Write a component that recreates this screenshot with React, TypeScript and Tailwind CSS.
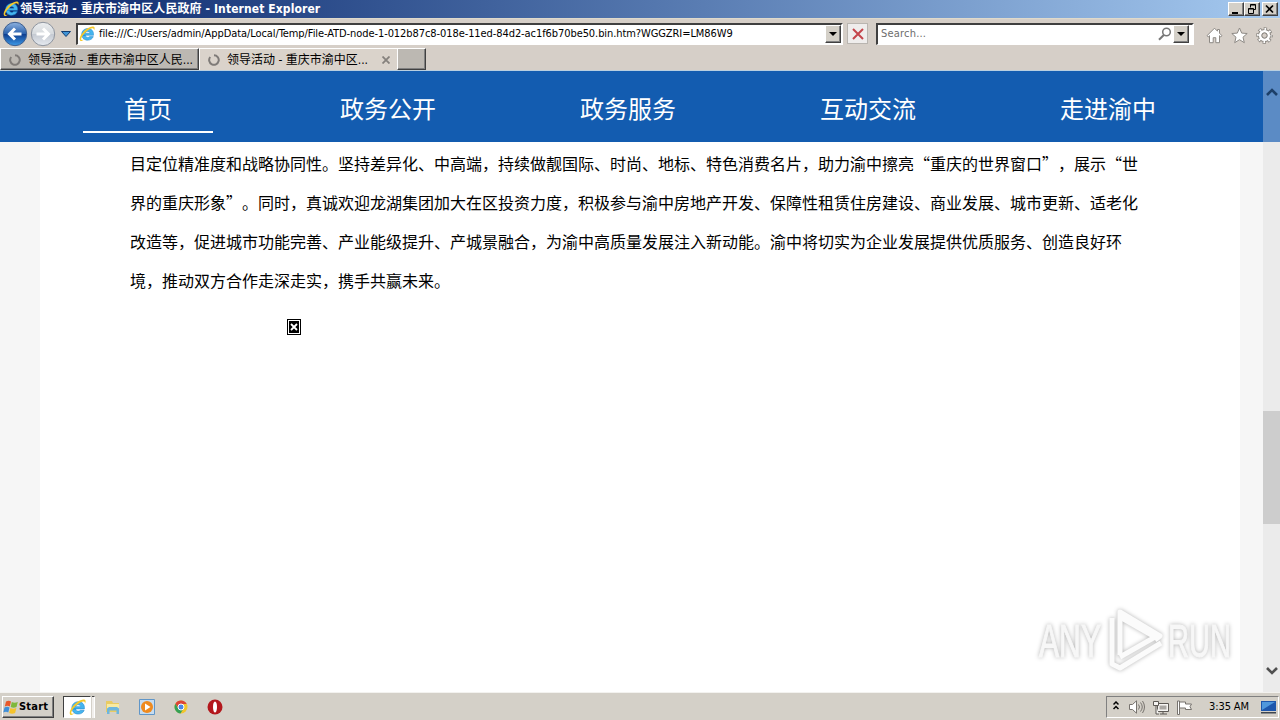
import type { ReactNode } from 'react';

const NAV = ['首页', '政务公开', '政务服务', '互动交流', '走进渝中'];

const LINES = [
  '目定位精准度和战略协同性。坚持差异化、中高端，持续做靓国际、时尚、地标、特色消费名片，助力渝中擦亮“重庆的世界窗口”，展示“世',
  '界的重庆形象”。同时，真诚欢迎龙湖集团加大在区投资力度，积极参与渝中房地产开发、保障性租赁住房建设、商业发展、城市更新、适老化',
  '改造等，促进城市功能完善、产业能级提升、产城景融合，为渝中高质量发展注入新动能。渝中将切实为企业发展提供优质服务、创造良好环',
  '境，推动双方合作走深走实，携手共赢未来。',
];

const RAISED =
  'border border-t-white border-l-white border-r-[#404040] border-b-[#404040] shadow-[inset_-1px_-1px_0_#808080]';

function IeLogo({ className }: { className: string }) {
  return (
    <svg viewBox="0 0 16 16" className={className}>
      <path d="M3.2 9.300h11.300c.4-4.300-2-6.700-5.800-6.700-3.500 0-6 2.400-6 5.800s2.500 5.800 6 5.800c2.700 0 4.700-1.300 5.600-3.600h-3.700c-.5.6-1.100.8-1.800.8-1.400 0-2.300-.8-2.400-2.100zm3.100-2.100c.2-1.100 1.100-1.800 2.400-1.800s2.200.7 2.300 1.800z" fill="#45b4ee" stroke="#1f86cc" strokeWidth=".5" />
      <path d="M1.300 14.800C-.9 12.700 3 6.500 7.500 3.100 11 .5 14.800-.4 15.500 1.500c.3.900 0 2-.6 3.100.2-1.200.1-2-.7-2.200C12.500 2 8.800 4 6 6.900c-3 3-4.500 6-3.600 6.800.6.500 1.700.2 3-.5-1.700 1.400-3.300 2.300-4.100 1.600z" fill="#f6c829" />
    </svg>
  );
}

function TitleBar() {
  return (
    <div className="flex h-[18px] shrink-0 items-center bg-linear-to-r from-[#0a246a] to-[#a6caf0] pl-[3px] pr-[2px]">
      <IeLogo className="h-4 w-4 shrink-0" />
      <span className="ml-px whitespace-nowrap text-[12px] font-bold tracking-[0.1px] text-white">
        领导活动 - 重庆市渝中区人民政府 - Internet Explorer
      </span>
      <div className="ml-auto flex">
        <CaptionButton>
          <path d="M3 10h6" strokeWidth="2" />
        </CaptionButton>
        <CaptionButton>
          <path d="M5.500 4.500v-3h5v5h-2M5.500 2h5M3.500 5.500h5v5h-5zM3.500 6h5" />
        </CaptionButton>
        <div className="w-[2px]" />
        <CaptionButton>
          <path d="M3 2.500l7 7M10 2.500l-7 7" strokeWidth="1.700" />
        </CaptionButton>
      </div>
    </div>
  );
}

function CaptionButton({ children }: { children: ReactNode }) {
  return (
    <button className={`h-[14px] w-4 bg-[#d4d0c8] ${RAISED}`}>
      <svg viewBox="0 0 14 12" className="h-3 w-[14px]" fill="none" stroke="#000">
        {children}
      </svg>
    </button>
  );
}

function RoundArrow({ back }: { back?: boolean }) {
  return (
    <svg viewBox="0 0 26 26" className="h-[26px] w-[26px]">
      <defs>
        <linearGradient id={back ? 'ball-on' : 'ball-off'} x1="0" y1="0" x2="0" y2="1">
          <stop offset="0" stopColor={back ? '#8fb3e0' : '#eceef0'} />
          <stop offset=".48" stopColor={back ? '#2d63ae' : '#d6dade'} />
          <stop offset=".52" stopColor={back ? '#0f3f91' : '#c5cad2'} />
          <stop offset="1" stopColor={back ? '#3f9be8' : '#e6eaf0'} />
        </linearGradient>
      </defs>
      <circle cx="13" cy="13" r="11.700" fill={back ? 'url(#ball-on)' : 'url(#ball-off)'} stroke={back ? '#3f5f8f' : '#8e949e'} />
      <path
        d={back ? 'M19.500 13H8M13 7.500L7.500 13l5.500 5.500' : 'M6.500 13H18M13 7.500l5.500 5.500-5.500 5.500'}
        fill="none"
        stroke="#fff"
        strokeWidth="3"
      />
    </svg>
  );
}

function DropButton() {
  return (
    <button className={`flex h-[18px] w-4 items-center justify-center bg-[#d4d0c8] ${RAISED}`}>
      <svg viewBox="0 0 8 4" className="h-1 w-2">
        <path d="M0 0h8L4 4z" />
      </svg>
    </button>
  );
}

function AddressBar() {
  return (
    <div className="flex h-[30px] shrink-0 items-center border-t border-[#dfdacb]">
      <div className="flex items-center pl-[2px]">
        <RoundArrow back />
        <div className="ml-[2px]">
          <RoundArrow />
        </div>
      </div>
      <svg viewBox="0 0 10 6" className="ml-[5px] h-[6px] w-[10px]">
        <path d="M.5.5h9L5 5.500z" fill="#3f94d6" stroke="#123e72" />
      </svg>
      <div className="ml-[5px] flex h-[22px] w-[767px] items-center border-2 border-b border-[#404040] border-r-white border-b-white bg-white pl-px">
        <IeLogo className="h-4 w-4 shrink-0" />
        <span className="ml-[4px] whitespace-nowrap text-[11px] tracking-[-0.08px] text-black">
          file:///C:/Users/admin/AppData/Local/Temp/File-ATD-node-1-012b87c8-018e-11ed-84d2-ac1f6b70be50.bin.htm?WGGZRI=LM86W9
        </span>
        <div className="ml-auto">
          <DropButton />
        </div>
      </div>
      <button className="ml-1 flex h-[21px] w-[21px] items-center justify-center border border-[#b9b5b0] bg-[#efedec]">
        <svg viewBox="0 0 12 12" className="h-3 w-3" stroke="#c4454b" strokeWidth="2">
          <path d="M1 1l10 10M11 1L1 11" />
        </svg>
      </button>
      <div className="ml-[8px] flex h-[22px] w-[318px] items-center border-2 border-b border-[#404040] border-r-white border-b-white bg-white px-[3px]">
        <span className="text-[11px] tracking-[0.2px] text-[#6d6d6d]">Search...</span>
        <svg viewBox="0 0 14 14" className="ml-auto mr-px h-[14px] w-[14px]" fill="none" stroke="#777" strokeWidth="1.500">
          <circle cx="8.500" cy="5" r="3.800" />
          <path d="M5.800 8L1 12.800" strokeWidth="2" />
        </svg>
        <DropButton />
      </div>
      <div className="ml-auto flex items-center gap-2 pr-[7px] pt-[3px]">
        <svg viewBox="0 0 17 17" className="h-[17px] w-[17px]" fill="#fff" stroke="#8d8984">
          <path d="M8.500 1.200L1 8.700l1.300 1.100 1.200-1.100v7h3.700v-5h2.600v5h3.700v-7l1.200 1.100L16 8.700l-2.500-2.500V2.500h-2v1.700z" />
        </svg>
        <svg viewBox="0 0 17 17" className="h-[17px] w-[17px]" fill="#fff" stroke="#8d8984">
          <path d="M8.500 1l2.200 5.100 5.500.4-4.200 3.700 1.300 5.500-4.800-3-4.800 3L5 10.200.8 6.500l5.500-.4z" />
        </svg>
        <svg viewBox="0 0 17 17" className="h-[17px] w-[17px]" fill="none" stroke="#8d8984">
          <circle cx="8.500" cy="8.500" r="6.300" strokeWidth="4" strokeDasharray="3 1.948" strokeDashoffset="1.500" />
          <circle cx="8.500" cy="8.500" r="4.600" strokeWidth="4" />
          <circle cx="8.500" cy="8.500" r="6.300" stroke="#fff" strokeWidth="2.600" strokeDasharray="1.600 3.348" strokeDashoffset=".8" />
          <circle cx="8.500" cy="8.500" r="4.300" stroke="#fff" strokeWidth="2.600" />
          <circle cx="8.500" cy="8.500" r="2.600" />
        </svg>
      </div>
    </div>
  );
}

function Spinner() {
  return (
    <svg viewBox="0 0 12 12" className="h-3 w-3 shrink-0" fill="none" stroke="#7f7b78" strokeWidth="2">
      <path d="M2.200 3A4.800 4.800 0 1 0 6 1.200" />
    </svg>
  );
}

function Tabs() {
  return (
    <div className="flex h-[22px] shrink-0 text-[12px] text-black">
      <div className={`flex w-[199px] items-center bg-[#bcb8b2] pl-2 pt-px ${RAISED}`}>
        <Spinner />
        <span className="ml-[7px] whitespace-nowrap">领导活动 - 重庆市渝中区人民...</span>
      </div>
      <div className="flex w-[198px] items-center border-l border-t border-white bg-[#dad3cb] pl-2">
        <Spinner />
        <span className="ml-[7px] whitespace-nowrap">领导活动 - 重庆市渝中区...</span>
        <svg viewBox="0 0 8 8" className="ml-auto mr-[7px] h-2 w-2" stroke="#85817d" strokeWidth="1.800">
          <path d="M.5.5l7 7M7.500.5l-7 7" />
        </svg>
      </div>
      <div className={`w-[29px] bg-[#bcb8b2] ${RAISED}`} />
    </div>
  );
}

function ScrollBar() {
  return (
    <div className="flex w-[17px] shrink-0 flex-col bg-[#ebebeb]">
      <div className="flex h-[71px] justify-center bg-[#5b8bc5] pt-[17px]">
        <svg viewBox="0 0 12 8" className="h-2 w-3" fill="none" stroke="#1d3f68" strokeWidth="2.600">
          <path d="M1 7l5-5 5 5" />
        </svg>
      </div>
      <div className="mt-[269px] h-[113px] bg-[#cdcdcd]" />
      <svg viewBox="0 0 12 8" className="mx-auto mb-[17px] mt-auto h-2 w-3" fill="none" stroke="#505050" strokeWidth="2.600">
        <path d="M1 1l5 5 5-5" />
      </svg>
    </div>
  );
}

function Watermark() {
  return (
    <svg viewBox="0 0 208 64" className="absolute right-[18px] bottom-[20px] h-16 w-[208px] drop-shadow-[0_0_2px_rgba(0,0,0,0.3)]">
      <g fill="#f7f7f7" stroke="#f7f7f7" fontFamily="'Liberation Sans', sans-serif" fontSize="47">
        <text transform="translate(2 48.500) scale(.642 1)">ANY</text>
        <text transform="translate(131 48.500) scale(.62 1)">RUN</text>
      </g>
      <g fill="none" stroke="#fbfbfb" strokeWidth="5" strokeLinejoin="round">
        <path d="M83 47V4l40 24-5 4" />
        <path d="M83 49l35-20-35-20M75 10v46l8 4 41-25" />
      </g>
    </svg>
  );
}

function Page() {
  return (
    <div className="flex min-h-0 flex-1 border-t border-[#b9cfe0]">
      <div className="relative flex flex-1 flex-col bg-[#f6f6f6]">
        <nav className="flex h-[71px] shrink-0 bg-[#135cb0] pl-7">
          {NAV.map((label, i) => (
            <div key={label} className="flex w-60 justify-center">
              <span
                className={`flex h-[62px] w-[130px] items-center justify-center whitespace-nowrap pt-[14px] text-[24px] text-white ${
                  i === 0 ? 'border-b-2 border-white' : 'border-b-2 border-transparent'
                }`}
              >
                {label}
              </span>
            </div>
          ))}
        </nav>
        <article className="ml-10 flex-1 w-[1200px] bg-white pl-[90px] pt-[2px] text-[16px] leading-[39px] text-black [text-spacing-trim:space-all]">
          {LINES.map((line) => (
            <p key={line} className="whitespace-nowrap">{line}</p>
          ))}
          <div className="ml-[157px] mt-[19px] flex h-4 w-[14px] items-center justify-center border border-black">
            <svg viewBox="0 0 10 12" className="h-3 w-[10px]" stroke="#fff" strokeWidth="1.800">
              <path d="M0 0h10v12H0z" fill="#000" stroke="none" />
              <path d="M2 3l6 6M8 3L2 9" />
            </svg>
          </div>
        </article>
        <Watermark />
      </div>
      <ScrollBar />
    </div>
  );
}

function WindowsFlag() {
  return (
    <svg viewBox="0 0 16 16" className="h-4 w-4 shrink-0">
      <path d="M3 2.500c2-1 3.500-1 5 0L6.800 7.500c-1.600-1-3.200-1-5 0z" fill="#e8582a" />
      <path d="M8.800 3c1.800 1 3.800 1 6 0l-1.300 5c-2 1-4 1-5.800 0z" fill="#7fb83a" />
      <path d="M1.500 8.500c1.800-1 3.400-1 5 0l-1.200 5c-1.500-1-3.200-1-5 0z" fill="#3f8fd8" />
      <path d="M7.400 9c1.800 1 3.800 1 6 0l-1.300 5c-2 1-4 1-6 0z" fill="#f5c32c" />
    </svg>
  );
}

function TaskBar() {
  return (
    <div className="flex h-[27px] shrink-0 items-center bg-[#d4d0c8] pt-px">
      <button className={`ml-[2px] flex h-[22px] w-[52px] items-center bg-[#d4d0c8] text-[11px] font-bold text-black ${RAISED}`}>
        <WindowsFlag />
        <span className="tracking-[0.2px]">Start</span>
      </button>
      <div className="ml-[9px] flex h-[22px] w-[28px] items-center justify-center border border-[#404040] border-r-white border-b-white bg-white">
        <IeLogo className="h-[17px] w-[17px]" />
      </div>
      <div className="ml-px h-[22px] w-[3px] border-t border-r border-[#404040] border-r-white bg-[#f1efec]" />
      <svg viewBox="0 0 16 16" className="ml-[10px] h-4 w-4">
        <path d="M1 2h6l1 2h6v9H1z" fill="#e9cb63" />
        <path d="M2 5h12v5H2z" fill="#f8eaa2" />
        <path d="M2 15V9.500l2-1.500h8l2 1.500V15h-2.500v-3.500h-7V15z" fill="#6db6de" />
      </svg>
      <svg viewBox="0 0 16 16" className="ml-[18px] h-4 w-4">
        <path d="M.5.5h15v15H.5z" fill="#c6dcf0" stroke="#6096c8" />
        <circle cx="8" cy="8" r="6" fill="#ef8a1e" />
        <path d="M6 4.500l5.500 3.500L6 11.500z" fill="#fff" />
      </svg>
      <svg viewBox="0 0 16 16" className="ml-[18px] h-4 w-4">
        <circle cx="8" cy="8" r="6.500" fill="#f2c52d" />
        <path d="M2.400 4.700A6.500 6.500 0 0 1 13.700 5H8L5.400 9.500z" fill="#dc4437" />
        <path d="M2.400 4.700A6.500 6.500 0 0 0 7.500 14.500L10.500 9.500 5.400 9.500z" fill="#35a056" />
        <circle cx="8" cy="8" r="3" fill="#4a86e8" stroke="#fff" />
      </svg>
      <svg viewBox="0 0 16 16" className="ml-[18px] h-4 w-4">
        <circle cx="8" cy="8" r="7.500" fill="#b3171c" />
        <ellipse cx="8" cy="8" rx="2" ry="5.500" fill="#fff" />
      </svg>
      <div className="ml-auto mr-px flex h-[22px] w-[173px] items-center border border-[#808080] border-r-white border-b-white pl-[6px] text-[11px] text-black">
        <svg viewBox="0 0 6 9" className="mb-[3px] h-[9px] w-[6px]" fill="none" stroke="#000" strokeWidth="1.500">
          <path d="M.5 3.500L3 1l2.500 2.500M.5 8L3 5.500 5.500 8" />
        </svg>
        <svg viewBox="0 0 16 14" className="ml-[10px] h-[14px] w-4" fill="#fff" stroke="#77736e">
          <path d="M.5 4.500h3L7.500.8v12.400L3.500 9.500h-3z" />
          <path d="M9.500 4.500q2 2.500 0 5M11.500 2.500q3.500 4.500 0 9M13.500 1q4 6 0 12" fill="none" />
        </svg>
        <svg viewBox="0 0 16 15" className="ml-2 h-[15px] w-4" fill="#f5f4f2" stroke="#5d5955">
          <path d="M4.500 3.500h11v8h-11zM7 14h7M10 12v2" />
          <path d="M6.500 5.500h7v4h-7z" fill="#aaa7a3" stroke="none" />
          <path d="M.5 1.500h5v4h-5zM3 5.500V14h3" />
        </svg>
        <svg viewBox="0 0 16 15" className="ml-2 h-[15px] w-4" fill="#fff" stroke="#77736e">
          <path d="M.5 1h2v13.500h-2zM2.500 2h6v2h6l-1.500 2.700 1.500 2.800h-6V8h-6z" />
        </svg>
        <span className="ml-4 whitespace-nowrap tracking-[-0.1px]">3:35 AM</span>
        <svg viewBox="0 0 15 14" className="ml-auto mr-[2px] h-[14px] w-[15px]">
          <path d="M0 1h15v10H0z" fill="#1d56ac" />
          <path d="M1 2h13L1 10z" fill="#4f97dc" />
          <path d="M0 12h15v1.500H0z" fill="#3e4650" />
        </svg>
      </div>
    </div>
  );
}

export default function App() {
  return (
    <div
      lang="zh-CN"
      className="flex h-[720px] w-[1280px] flex-col overflow-hidden bg-[#d6cfc8] font-['DejaVu_Sans_Condensed','Noto_Sans_CJK_SC',sans-serif]"
    >
      <TitleBar />
      <AddressBar />
      <Tabs />
      <div className="flex min-h-0 flex-1 border-b border-[#f3f2ef] font-['Noto_Sans_CJK_SC',sans-serif]">
        <Page />
      </div>
      <TaskBar />
    </div>
  );
}
